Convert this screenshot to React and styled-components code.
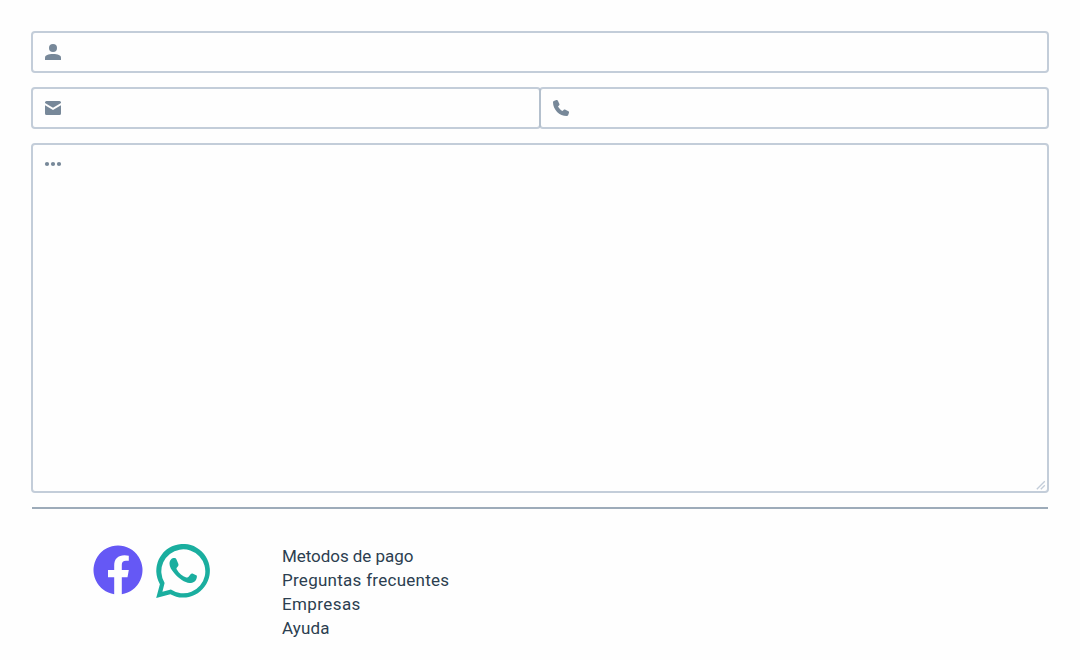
import React from "react";
import styled, { createGlobalStyle } from "styled-components";

const GlobalStyle = createGlobalStyle`
  *, *::before, *::after { box-sizing: border-box; }
  body { margin: 0; background: #fefefe; overflow: hidden; }
`;

const Page = styled.main`
  width: 1080px;
  height: 660px;
  padding: 31px;
  color: #2c3e50;
  font-family: Roboto, "Noto Sans", sans-serif;
`;

const Form = styled.form`
  display: flex;
  flex-direction: column;
  gap: 14px;
`;

const Row = styled.div`
  display: flex;
`;

const Field = styled.label`
  display: flex;
  flex: 1;
  height: ${(p) => p.$height || 42}px;
  margin-left: ${(p) => (p.$joined ? -2 : 0)}px;
  padding: 10px 11px;
  border: 2px solid #c3cdd9;
  border-left-color: ${(p) => (p.$joined ? "#b4c0cd" : "#c3cdd9")};
  border-radius: 4px;
  justify-content: space-between;
`;

const Icon = styled.svg`
  display: block;
  flex: none;
  width: 18px;
  height: 18px;
  fill: #778899;
`;

const Resizer = styled.svg`
  display: block;
  align-self: flex-end;
  width: 10px;
  height: 10px;
  margin: 0 -10px -9px 0;
  fill: none;
  stroke: #c3cdd9;
  stroke-width: 1.3;
`;

const Divider = styled.hr`
  height: 2px;
  margin: 14px 1px 0;
  border: 0;
  background: #9dabb9;
`;

const Footer = styled.footer`
  display: flex;
  padding: 35px 0 0 62px;
`;

const Social = styled.div`
  display: flex;
  gap: 13px;
  width: 189px;
`;

const Logo = styled.svg`
  display: block;
  flex: none;
  width: ${(p) => p.$size}px;
  height: ${(p) => p.$size}px;
  margin-top: ${(p) => p.$top || 0}px;
  fill: ${(p) => p.$color};
`;

const Links = styled.nav`
  display: flex;
  flex-direction: column;
`;

const FooterLink = styled.a`
  font-size: 17px;
  line-height: 24px;
  letter-spacing: ${(p) => p.$spacing}px;
  white-space: nowrap;
`;

const links = [
  ["Metodos de pago", -0.05],
  ["Preguntas frecuentes", 0.27],
  ["Empresas", 0.4],
  ["Ayuda", 0.15],
];

export default function App() {
  return (
    <>
      <GlobalStyle />
      <Page>
        <Form>
          <Row>
            <Field>
              <Icon viewBox="0 0 18 18">
                <circle cx="9" cy="5" r="4" />
                <path d="M1 17v-2.3C1 12.2 4.1 11 9 11s8 1.2 8 3.700V17z" />
              </Icon>
            </Field>
          </Row>
          <Row>
            <Field>
              <Icon viewBox="0 0 18 18">
                <path d="M2.5 2h13A1.5 1.5 0 0 1 17 3.5V4L9 8.700 1 4v-.5A1.5 1.5 0 0 1 2.5 2z" />
                <path d="M1 6.300l8 4.700 8-4.700v8.200a1.5 1.5 0 0 1-1.5 1.5h-13A1.5 1.5 0 0 1 1 14.500z" />
              </Icon>
            </Field>
            <Field $joined>
              <Icon viewBox="0 0 18 18">
                <path d="M1.800 1.900 4.300 1C5 .8 5.500 1 5.800 1.600L7.400 5C7.600 5.500 7.500 5.900 7.200 6.200L6 7.500C7 9.400 8.500 11 10.500 12L11.800 10.800C12.100 10.500 12.500 10.400 13 10.600L16.400 12.200C17 12.500 17.200 13 17 13.700L16.100 16.200C15.900 16.800 15.400 17 14.800 17C7.400 17 1 10.600 1 3.200C1 2.600 1.200 2.100 1.800 1.900Z" />
              </Icon>
            </Field>
          </Row>
          <Row>
            <Field $height={350}>
              <Icon viewBox="0 0 18 18">
                <circle cx="3" cy="9" r="2.100" />
                <circle cx="9" cy="9" r="2.100" />
                <circle cx="15" cy="9" r="2.100" />
              </Icon>
              <Resizer viewBox="0 0 10 10">
                <path d="M.8 9.200 8.800 1.200M4.800 9.200 8.800 5.200" />
              </Resizer>
            </Field>
          </Row>
        </Form>
        <Divider />
        <Footer>
          <Social>
            <Logo $size={50} $top={1} $color="#6558f5" viewBox="93 545 50 50">
              <path d="M114.200 594.200A24.500 24.500 0 1 1 121.800 594.200V577.300H127.500L128.800 570H121.800V564.800C121.800 562.200 123.200 560.800 126 560.800H128.800V555.700C127.500 555.500 126 555.300 124.500 555.300C118 555.300 114.200 559 114.200 565.500V570H108V577.300H114.200Z" />
            </Logo>
            <Logo $size={54} $color="#1aae9f" viewBox="156 544.300 54 54">
              <path
                fillRule="evenodd"
                d="M156.200 598.200 159.900 584.500A26.800 26.800 0 1 1 170.300 594.600ZM162.400 592 170.900 589.800A22 22 0 1 0 164.600 583.200Z"
              />
              <path d="M171.400 559.400C172.300 558.400 173.800 558.200 175 558.400C175.900 558.600 176.300 559.500 176.700 560.400L178.300 564C178.800 565.300 178.300 566.100 177.400 567.200C176.600 568.100 176.100 568.500 176.800 569.700C179.100 573.600 182.300 576.200 186.300 577.700C187.300 578.100 187.900 577.900 188.600 577.100L190.600 574.600C191.300 573.700 192 573.600 193 574L196.200 575.500C197 575.900 197 576.600 196.800 577.700C196.200 581.600 192.900 583.400 189.500 583.300C184.900 583.100 178.700 578.900 174.300 573.600C171.500 570.200 169.500 567.200 169.500 564.100C169.500 562.200 170.200 560.600 171.400 559.400Z" />
            </Logo>
          </Social>
          <Links>
            {links.map(([text, spacing]) => (
              <FooterLink key={text} $spacing={spacing}>{text}</FooterLink>
            ))}
          </Links>
        </Footer>
      </Page>
    </>
  );
}
